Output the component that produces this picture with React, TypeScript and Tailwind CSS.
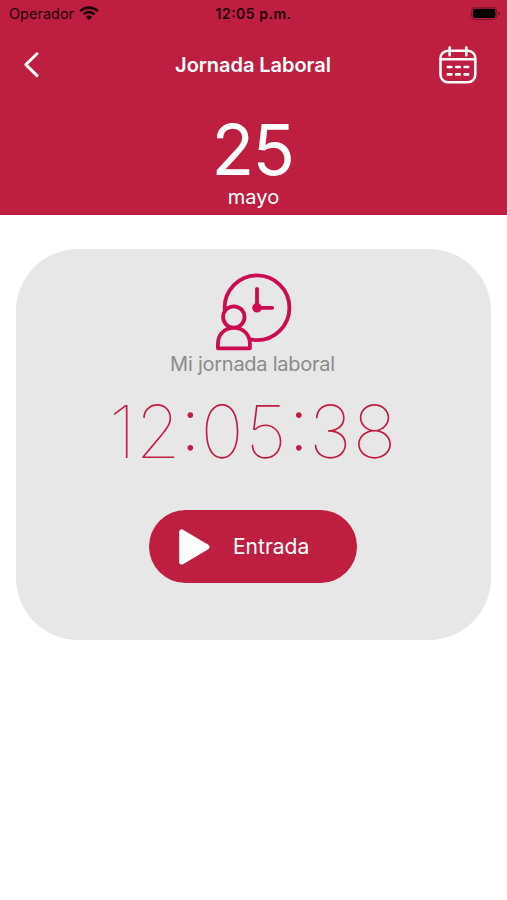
import type { ReactNode } from "react";

function WifiIcon() {
  return (
    <svg width="20" height="15" viewBox="0 0 20 15" fill="none" stroke="#1c0409" strokeWidth="2.7">
      <path d="M1.3 5.1a12.4 12.4 0 0 1 17.4 0" />
      <path d="M4.4 8.4a8 8 0 0 1 11.2 0" />
      <path d="M10 14 6.9 10.9a4.4 4.4 0 0 1 6.2 0Z" fill="#1c0409" stroke="none" />
    </svg>
  );
}

function BatteryIcon() {
  return (
    <svg width="30" height="14" viewBox="0 0 30 14">
      <rect x="0.7" y="0.2" width="25" height="12.4" rx="3.6" fill="none" stroke="#7c1229" strokeWidth="1" />
      <rect x="2" y="1.8" width="22.4" height="9.3" rx="2" fill="#000" />
      <path d="M27.4 4.4v4q1.7-.6 1.7-2t-1.7-2Z" fill="#7c1229" />
    </svg>
  );
}

function CalendarIcon() {
  return (
    <svg width="38" height="38" viewBox="0 0 38 38" fill="none" stroke="#fff" strokeWidth="2.5" strokeLinecap="round">
      <rect x="1.5" y="4.7" width="34.8" height="31.6" rx="7.5" />
      <path d="M2 13.3h34" />
      <path d="M10.7 1.6v7.6M27.3 1.6v7.6" strokeWidth="2.6" />
      <path
        d="M8.8 21h3.6M17.2 21h3.6M25.6 21h3.6M8.8 28.4h3.6M17.2 28.4h3.6M25.6 28.4h3.6"
        strokeWidth="2.6"
      />
    </svg>
  );
}

function WorkdayIcon() {
  return (
    <svg width="76" height="78" viewBox="0 0 76 78" fill="none" stroke="#cb0c52" strokeWidth="3.8">
      <circle cx="41" cy="34.8" r="32.4" />
      <path d="M41 15.8v19h15.2" strokeLinecap="round" />
      <circle cx="41" cy="34.8" r="4.8" fill="#cb0c52" stroke="none" />
      <circle cx="17.8" cy="44" r="10.7" fill="#e7e7e7" />
      <path
        d="M1.9 75.3V71c0-9.3 6.2-16.1 16-16.1S33.9 61.7 33.9 71v4.3Z"
        fill="#e7e7e7"
        strokeLinejoin="round"
      />
    </svg>
  );
}

function Header({ children }: { children: ReactNode }) {
  return <header className="h-[215px] bg-[#be1e40]">{children}</header>;
}

export default function App() {
  return (
    <div className="min-h-[900px] w-full overflow-hidden bg-white font-['Inter','Liberation_Sans',sans-serif]">
      <Header>
        <div className="grid h-[27px] grid-cols-3 items-center pr-[6px] pl-[9px] text-[#1c0409]">
          <div className="flex items-center gap-[5px]">
            <span className="text-[14.5px]">Operador</span>
            <WifiIcon />
          </div>
          <span className="-ml-[3px] text-center text-[14px] font-semibold tracking-[0.5px] [font-feature-settings:'case']">
            12:05 p.m.
          </span>
          <div className="flex justify-end">
            <BatteryIcon />
          </div>
        </div>

        <div className="flex h-[76px] items-center justify-between pr-[30px] pl-[23px]">
          <svg width="46" height="26" viewBox="0 0 46 26" fill="none" stroke="#fff" strokeWidth="2.9">
            <path d="M14 1.8 2.8 12.6 14 23.6" strokeLinecap="round" strokeLinejoin="round" />
          </svg>
          <h1 className="-ml-[2px] text-[20px] font-semibold tracking-[-0.05px] text-white">Jornada Laboral</h1>
          <CalendarIcon />
        </div>

        <div className="flex flex-col items-center pt-[12px] text-white">
          <span className="-ml-[2px] text-[70px] leading-[70px] tracking-[-1.5px]">25</span>
          <span className="text-[20px] leading-[24px]">mayo</span>
        </div>
      </Header>

      <main className="px-[16px] pt-[34px]">
        <section className="flex h-[391px] flex-col items-center rounded-[62px] bg-[#e7e7e7] pt-[24px]">
          <WorkdayIcon />
          <p className="mt-px -ml-[2px] text-[20px] leading-[24px] tracking-[-0.25px] text-[#8a8a8a]">Mi jornada laboral</p>
          <p className="mt-[20px] text-[73px] leading-[72px] font-thin text-[#be1e40] [font-feature-settings:'case']">
            <span className="tracking-[-0.5px]">12</span>
            <span className="font-extralight">:</span>
            <span className="tracking-[2px]">05</span>
            <span className="font-extralight">:</span>
            <span className="tracking-[1.5px]">38</span>
          </p>
          <button className="mt-[42px] -ml-[2px] flex h-[73px] w-[208px] items-center rounded-full bg-[#be1e40] pl-[30px] text-white">
            <svg width="32" height="36" viewBox="0 0 32 36">
              <path
                d="M2.7 3v30L28 18Z"
                fill="#fff"
                stroke="#fff"
                strokeWidth="5"
                strokeLinejoin="round"
              />
            </svg>
            <span className="ml-[22.5px] text-[21px]">Entrada</span>
          </button>
        </section>
      </main>
    </div>
  );
}
